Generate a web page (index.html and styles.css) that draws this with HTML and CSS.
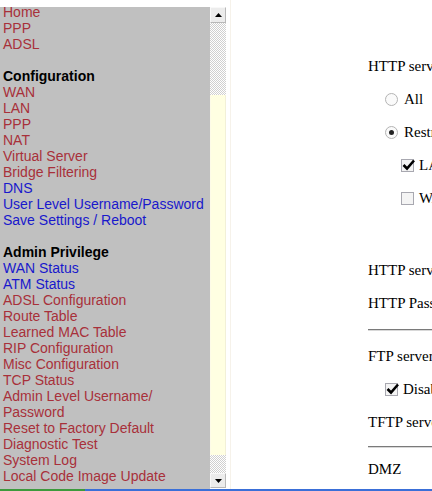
FILE: index.html
```html
<!DOCTYPE html>
<html lang="en">
<head>
    <meta charset="UTF-8">
    <meta name="viewport" content="width=device-width, initial-scale=1.0">
    <title>Router Setup</title>
    <link rel="stylesheet" href="styles.css">
</head>
<body>

    <div class="page">
        <!-- left menu frame -->
        <div class="nav">
            <a class="red" href="#">Home</a>
            <a class="red" href="#">PPP</a>
            <a class="red" href="#">ADSL</a>
            <div class="blank"></div>
            <div class="heading">Configuration</div>
            <a class="red" href="#">WAN</a>
            <a class="red" href="#">LAN</a>
            <a class="red" href="#">PPP</a>
            <a class="red" href="#">NAT</a>
            <a class="red" href="#">Virtual Server</a>
            <a class="red" href="#">Bridge Filtering</a>
            <a class="blue" href="#">DNS</a>
            <a class="blue" href="#">User Level Username/Password</a>
            <a class="blue" href="#">Save Settings / Reboot</a>
            <div class="blank"></div>
            <div class="heading">Admin Privilege</div>
            <a class="blue" href="#">WAN Status</a>
            <a class="blue" href="#">ATM Status</a>
            <a class="red" href="#">ADSL Configuration</a>
            <a class="red" href="#">Route Table</a>
            <a class="red" href="#">Learned MAC Table</a>
            <a class="red" href="#">RIP Configuration</a>
            <a class="red" href="#">Misc Configuration</a>
            <a class="red" href="#">TCP Status</a>
            <a class="red" href="#">Admin Level Username/<br>Password</a>
            <a class="red" href="#">Reset to Factory Default</a>
            <a class="red" href="#">Diagnostic Test</a>
            <a class="red" href="#">System Log</a>
            <a class="red" href="#">Local Code Image Update</a>
        </div>

        <!-- scrollbar of the menu frame -->
        <div class="scrollbar">
            <div class="arrow-btn">
                <svg width="7" height="4" viewBox="0 0 7 4"><path d="M3.5 0 L7 4 L0 4 Z" fill="#000"/></svg>
            </div>
            <div class="track track-top"></div>
            <div class="thumb"></div>
            <div class="track track-bottom"></div>
            <div class="arrow-btn down">
                <svg width="7" height="4" viewBox="0 0 7 4"><path d="M0 0 L7 0 L3.5 4 Z" fill="#000"/></svg>
            </div>
        </div>

        <!-- main settings frame -->
        <div class="main">
            <div class="row">HTTP server access</div>
            <div class="row indent1">
                <span class="radio"></span>All
            </div>
            <div class="row indent1">
                <span class="radio checked"></span>Restricted
            </div>
            <div class="row indent2">
                <span class="checkbox"><svg class="tick" width="13" height="12" viewBox="0 0 13 12"><path d="M1.5 6 L5 9.5 L12 1.5" fill="none" stroke="#000" stroke-width="2.6"/></svg></span>LAN
            </div>
            <div class="row indent2">
                <span class="checkbox"></span>WAN
            </div>
            <div class="row spaced">HTTP server port</div>
            <div class="row">HTTP Password</div>
            <hr class="rule first">
            <div class="row">FTP server</div>
            <div class="row indent1">
                <span class="checkbox"><svg class="tick" width="13" height="12" viewBox="0 0 13 12"><path d="M1.5 6 L5 9.5 L12 1.5" fill="none" stroke="#000" stroke-width="2.6"/></svg></span>Disable
            </div>
            <div class="row">TFTP server</div>
            <hr class="rule second">
            <div class="row">DMZ</div>
        </div>
    </div>

    <div class="taskbar"></div>

</body>
</html>
```

FILE: styles.css
```css
html,
body {
    margin: 0;
    height: 100%;
    overflow: hidden;
    background: #fff;
}

.page {
    display: flex;
    height: 489px;
}

/* left menu */
.nav {
    width: 210px;
    flex: none;
    padding: 4px 0 0 3px;
    box-sizing: border-box;
    background: linear-gradient(#fff 7px, #c0c0c0 7px);
    font-family: "Liberation Sans", Arial, sans-serif;
    font-size: 14px;
    line-height: 16px;
    white-space: nowrap;
    overflow: hidden;
}

.nav a {
    display: block;
    text-decoration: none;
}

.nav a.red {
    color: #a8303a;
}

.nav a.blue {
    color: #1818cc;
}

.nav .heading {
    font-weight: bold;
    color: #000;
}

.nav .blank {
    height: 16px;
}

/* scrollbar */
.scrollbar {
    width: 16px;
    flex: none;
    padding-top: 7px;
    display: flex;
    flex-direction: column;
}

.arrow-btn {
    height: 16px;
    flex: none;
    display: flex;
    align-items: center;
    justify-content: center;
    background: #ececec;
    border: 1px solid #f8f8f8;
    border-right-color: #b8b8b8;
    border-bottom-color: #b8b8b8;
    box-sizing: border-box;
}

.arrow-btn.down {
    height: 15px;
}

.track {
    flex: none;
    background: repeating-conic-gradient(#d0d0d0 0 25%, #fff 0 50%) 0 0 / 2px 2px;
}

.track-top {
    height: 72px;
}

.track-bottom {
    height: 18px;
}

.thumb {
    flex: none;
    height: 360px;
    background: #ffffe2;
    border-left: 1px solid #fdfbe8;
    border-right: 1px solid #f2f0d8;
}

/* main frame */
.main {
    flex: 1;
    min-width: 0;
    margin-left: 4px;
    border-left: 1px solid #f6f2ea;
    padding: 50px 0 0 137px;
    font-family: "Liberation Serif", "Times New Roman", serif;
    font-size: 15px;
    color: #000;
    white-space: nowrap;
    overflow: hidden;
}

.row {
    height: 33px;
    display: flex;
    align-items: center;
}

.row.indent1 {
    padding-left: 17px;
}

.row.indent2 {
    padding-left: 33px;
}

.row.spaced {
    margin-top: 39px;
}

.radio {
    flex: none;
    width: 13px;
    height: 13px;
    border: 1px solid #b4b4b4;
    border-radius: 50%;
    box-sizing: border-box;
    margin-right: 6px;
    display: flex;
    align-items: center;
    justify-content: center;
    background: #fafafa;
}

.radio.checked::after {
    content: "";
    width: 5px;
    height: 5px;
    border-radius: 50%;
    background: #222;
}

.checkbox {
    flex: none;
    position: relative;
    width: 13px;
    height: 13px;
    border: 1px solid #a8a8b0;
    box-sizing: border-box;
    margin-right: 5px;
    background: #f4f4f4;
}

/* the tick runs a little past the box edge */
.checkbox .tick {
    position: absolute;
    left: 0;
    top: -1px;
}

.rule {
    border: none;
    border-top: 1px solid #7a7a7a;
    border-bottom: 1px solid #d8d8d8;
    margin: 0;
}

.rule.first {
    margin: 9px 0 9px;
}

.rule.second {
    margin: 7px 0 5px;
}

/* bottom edge of the window */
.taskbar {
    height: 2px;
    background: linear-gradient(to right, #3c9a3c 85px, #3a6fd8 85px);
}
```
